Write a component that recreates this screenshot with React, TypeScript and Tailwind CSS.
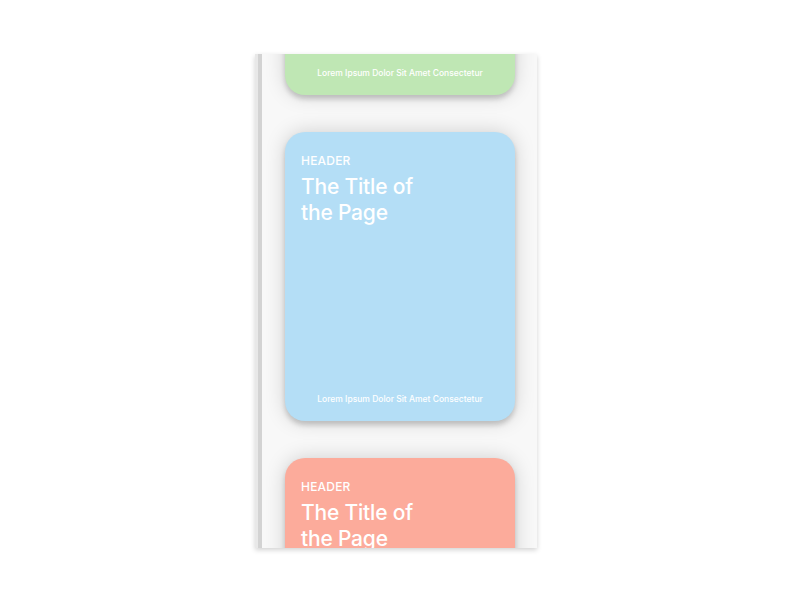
const cards = [
  { color: "bg-[#bfe7b4]" },
  { color: "bg-[#b4def6]" },
  { color: "bg-[#fcab9b]" },
];

const Card = ({ color }: { color: string }) => {
  return (
    <div
      className={`${color} w-[230px] h-[289px] shrink-0 rounded-[20px] px-4 pt-[21px] pb-[15px] flex flex-col text-white shadow-[0_4px_5px_rgba(0,0,0,0.17),0_0_20px_rgba(0,0,0,0.17)]`}
    >
      <div className="text-[12px] leading-[16px] font-medium tracking-[0.2px]">HEADER</div>
      <h1 className="mt-[5px] text-[21px] leading-[26px] font-medium tracking-[-0.2px]">
        The Title of
        <br />
        the Page
      </h1>
      <p className="mt-auto text-center text-[8.5px] leading-[14px] font-medium">
        Lorem Ipsum Dolor Sit Amet Consectetur
      </p>
    </div>
  );
};

export default function App() {
  return (
    <div className="w-[800px] h-[600px] bg-white pt-[54px] pl-[255px] font-['Inter',sans-serif]">
      <div className="w-[282px] h-[494px] overflow-hidden bg-[#f8f8f8] flex shadow-[0_2px_5px_rgba(0,0,0,0.18)]">
        {/* side edge */}
        <div className="w-[7px] shrink-0 border-l-[3px] border-[#e8e8e8] bg-[#d3d3d3]" />
        <div className="flex-1 pl-[23px]">
          <div className="mt-[-248px] flex flex-col gap-[37px]">
            {cards.map((c, i) => (
              <Card key={i} color={c.color} />
            ))}
          </div>
        </div>
      </div>
    </div>
  );
}
